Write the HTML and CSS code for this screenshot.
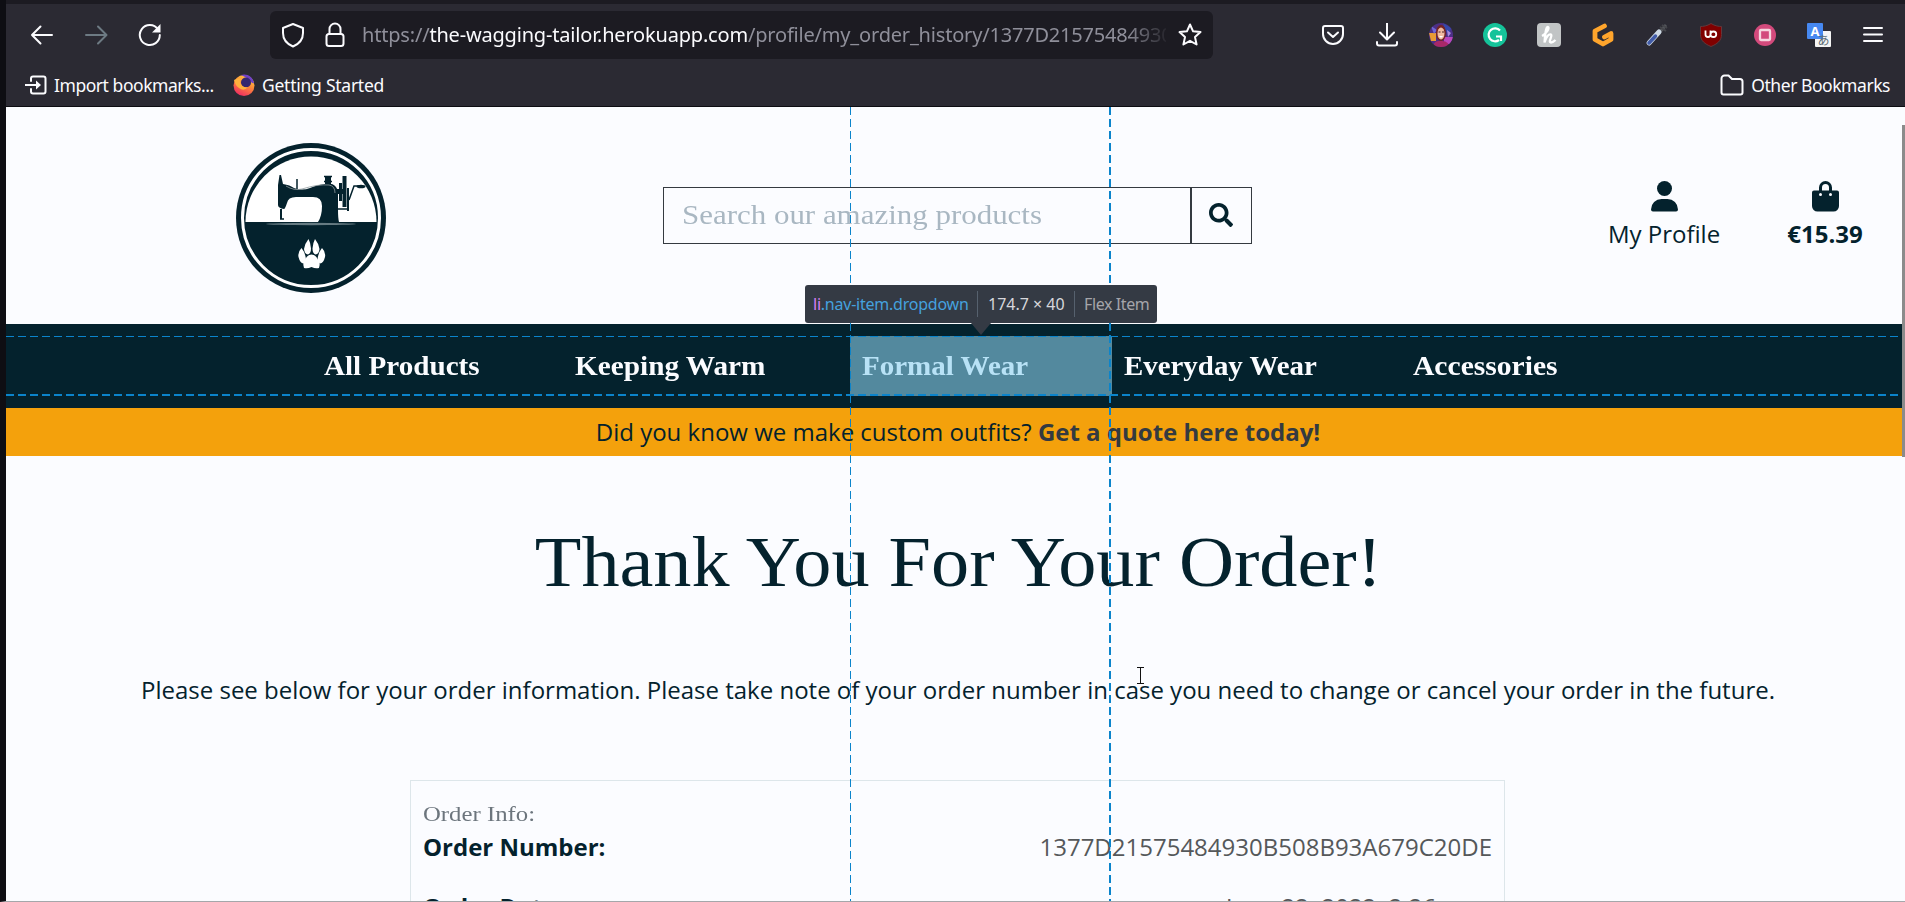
FILE: index.html
```html
<!DOCTYPE html>
<html lang="en">
<head>
<meta charset="utf-8">
<title>The Wagging Tailor</title>
<link rel="stylesheet" href="styles.css">
</head>
<body>
<div class="window">
  <div class="tabstrip"></div>
  <div class="toolbar">
    <svg class="ico back" width="24" height="24" viewBox="0 0 24 24"><path d="M22 12H2M10.500 3.500L2 12l8.500 8.500"/></svg>
    <svg class="ico forward" width="24" height="24" viewBox="0 0 24 24"><path d="M2 12h20M14 3.500l8.500 8.500-8.500 8.500"/></svg>
    <svg class="ico reload" width="24" height="24" viewBox="0 0 24 24"><path d="M20 6.300A10 10 0 1 0 21.800 12"/><path class="solid" d="M22.500 1v8.500H14z"/></svg>
    <div class="urlbar">
      <svg class="ico shield" width="24" height="26" viewBox="0 0 24 26"><path d="M12 2l10 4v5c0 6-4 11-10 13.500C6 22 2 17 2 11V6z"/></svg>
      <svg class="ico lock" width="20" height="26" viewBox="0 0 20 26"><path d="M4.500 12V7a5.500 5.500 0 0 1 11 0v5"/><rect x="1.500" y="12" width="17" height="12" rx="2.500"/></svg>
      <div class="url">https://<span>the-wagging-tailor.herokuapp.com</span>/profile/my_order_history/1377D21575484930</div>
      <svg class="ico star" width="26" height="26" viewBox="0 0 26 26"><path d="M13 2.500l3.100 6.800 7.400.8-5.500 5 1.600 7.400L13 18.800l-6.600 3.700L8 15.100l-5.500-5 7.400-.8z"/></svg>
    </div>
    <div class="extensions">
      <svg class="ico" width="24" height="24" viewBox="0 0 24 24"><path d="M4 3h16a2 2 0 0 1 2 2v6a10 10 0 0 1-20 0V5a2 2 0 0 1 2-2zM7 9.500l5 4.500 5-4.500"/></svg>
      <svg class="ico" width="24" height="24" viewBox="0 0 24 24"><path d="M12 0v16M5 9.500l7 7 7-7M2 19v1.500a2 2 0 0 0 2 2h16a2 2 0 0 0 2-2V19"/></svg>
      <svg width="24" height="24" viewBox="0 0 24 24"><defs><clipPath id="round"><circle cx="12" cy="12" r="12"/></clipPath></defs><g clip-path="url(#round)"><rect width="24" height="24" fill="#4c2f86"/><path d="M0 10h7v8H2z" fill="#e79a35"/><path d="M2 3l6 4-3 4z" fill="#6f66d8"/><path d="M14 0l8 5-2 7-4-5z" fill="#3448ab"/><path d="M15 14h9v7h-9z" fill="#b947bd"/><path d="M18 7l4 3-3 4z" fill="#a68ae0"/><path d="M4 24c1-6 4-6 8-6s8 1 8 6z" fill="#a72869"/><ellipse cx="12" cy="10" rx="5" ry="8" fill="#742425"/><ellipse cx="12" cy="10.500" rx="3.500" ry="6" fill="#f1bca2"/><path d="M10 13q2 3 4 0z" fill="#fff"/><path d="M9.500 9h2M13 9h2" stroke="#4a2020"/></g></svg>
      <svg width="24" height="24" viewBox="0 0 24 24"><circle cx="12" cy="12" r="12" fill="#15c39a"/><path d="M17 7.500a6.500 6.500 0 1 0-1 9.500M18 18v-4.500h-5" fill="none" stroke="#fff" stroke-width="2.200"/></svg>
      <svg width="24" height="24" viewBox="0 0 24 24"><rect width="24" height="24" rx="4" fill="#c1c4c5"/><path d="M5 13C9 11 13 5 11 4S8 12 7.500 19.500c1.500-5.500 4.500-9 6.500-8s-3.500 8 0 8q2 0 4.500-2.500" fill="none" stroke="#fff" stroke-width="2.300"/></svg>
      <svg width="24" height="24" viewBox="0 0 24 24"><path d="M13.500 3L4 8v8.500l8 4.500 8-4.500v-6l-6.500 3.500" fill="none" stroke="#ffa52c" stroke-width="4.800" stroke-linejoin="round" stroke-linecap="round"/></svg>
      <svg width="24" height="24" viewBox="0 0 24 24"><path d="M14 10l7-8" stroke="#55575e" stroke-width="3"/><path d="M15 4l6 4M17 2l5 3" stroke="#45464b" stroke-width="2"/><path d="M4 20L14 9" stroke="#ced9e5" stroke-width="5" stroke-linecap="round"/><path d="M4 20l6.500-7" stroke="#415ba8" stroke-width="3.500" stroke-linecap="round"/></svg>
      <svg width="24" height="24" viewBox="0 0 24 24"><path d="M12 .5C8 3 4 3.500 1.500 3.500v8C1.500 18 6 21 12 23.500 18 21 22.500 18 22.500 11.500v-8C20 3.500 16 3 12 .5z" fill="#800000" stroke="#62373b"/><path d="M6.500 7.500v4q0 2.500 2.500 2.500t2.500-2.500v-4M11.500 11.500q0-3 3-3a2.700 2.700 0 0 1 0 5.500q-3 0-3-2.500" fill="none" stroke="#fff" stroke-width="1.800"/></svg>
      <svg width="24" height="24" viewBox="0 0 24 24"><circle cx="12" cy="12" r="11" fill="#d34a7c"/><rect x="7" y="7" width="10" height="10" rx="1" fill="#d34a7c" stroke="#f5d7df" stroke-width="2.300"/></svg>
      <svg width="24" height="24" viewBox="0 0 24 24"><rect x="8" y="8" width="16" height="16" rx="1" fill="#f5f5f5"/><rect width="16" height="16" rx="1" fill="#4688f1"/><text class="latin" x="8" y="13">A</text><text class="kana" x="16.500" y="22">あ</text></svg>
      <svg class="ico menu" width="24" height="24" viewBox="0 0 24 24"><path d="M3 5h18M3 11.500h18M3 18h18"/></svg>
    </div>
  </div>
  <div class="bookmarks">
    <svg class="ico" width="22" height="20" viewBox="0 0 22 20"><path d="M6 6V3.500A2 2 0 0 1 8 1.500h10.500a2 2 0 0 1 2 2v13a2 2 0 0 1-2 2H8a2 2 0 0 1-2-2V14M0 10h12"/><path class="solid" d="M11 5.500l5 4.500-5 4.500z"/></svg>
    <span class="bm bm-import">Import bookmarks...</span>
    <svg width="22" height="22" viewBox="0 0 22 22"><defs><linearGradient id="flame" x1=".8" y1="0" x2=".3" y2="1"><stop offset="0" stop-color="#ffdc45"/><stop offset=".45" stop-color="#ff8b38"/><stop offset="1" stop-color="#ef2a63"/></linearGradient></defs><circle cx="11" cy="11.500" r="10.500" fill="url(#flame)"/><path d="M8 1c5-2 12 1 13 8-2 1-4-2-5-4z" fill="#7041c8"/><circle cx="13" cy="8.500" r="5" fill="#35266f"/><path d="M1 6q5-3 8-1-3 2-1 5 2 4 7 3-4 5-9 1Q2 11 1 6z" fill="#ffb13d"/></svg>
    <span class="bm bm-start">Getting Started</span>
    <svg class="ico folder" width="24" height="22" viewBox="0 0 24 22"><path d="M1.500 18.500v-14a3 3 0 0 1 3-3h4l3.500 3.500h8a2.500 2.500 0 0 1 2.500 2.500v11a2 2 0 0 1-2 2h-17a2 2 0 0 1-2-2z"/></svg>
    <span class="bm bm-other">Other Bookmarks</span>
  </div>

  <div class="page">
    <header class="header">
      <svg class="logo" width="150" height="150" viewBox="0 0 150 150">
        <circle cx="75" cy="75" r="75" fill="#04222d"/><circle cx="75" cy="75" r="68.500" fill="none" stroke="#fff" stroke-width="3"/>
        <path d="M9.500 79a65.500 65.500 0 0 1 131 0z" fill="#fff"/>
        <g fill="#04222d">
          <path d="M42 42l1.500-10h1.500l2 9q7 1 11 4 8 3 16 0 13-5 22-4 5 2 6 8v18q0 8 1 12H82q4-6 4-16 0-9-9-9H60q-8 0-9 6-2 6-3 6-6-1-6-4z"/>
          <path d="M89 33h6v8h-6zM103 40h3v18h-3zM106.500 33h4v31h-4zM111 45h2v23h-2zM44 66h2v10h-2zM99 46h8v5h-8z"/>
        </g>
        <path d="M61 36v10M88 33.500h8M88 38.500h8M113 57l5-14h5M100 66h13M44 76h4" fill="none" stroke="#04222d" stroke-width="1.500"/>
        <ellipse cx="125" cy="43.500" rx="4.500" ry="1.800" fill="#04222d"/>
        <path d="M50 43q8 5 16 3 16-5 27-4 6 1 6 8" fill="none" stroke="#8e999d" stroke-width=".8"/>
        <ellipse cx="75" cy="81" rx="45" ry="1.200" fill="#667b82"/>
        <g fill="#fff"><path d="M75.500 111.500q4 0 6 4.500 3.500 3.500 1.500 9-3.500 1-7.500-1-4 2-7.500 1-2-5.500 1.500-9 2-4.500 6-4.500z"/><path d="M72.500 96q-4 5-4.500 10 .5 5 4 5.500 3-1 3-6-.5-6-2.500-9.500zM79 96q-2 3.500-2.500 9.500 0 5 3 6 3.500-.5 4-5.500-.5-5-4.500-10zM65.500 105q-4 4-3 9 1.500 6 5 6.500 3.500-1.500 2-7-1-5-4-8.500zM86 105q-3 3.500-4 8.500-1.500 5.500 2 7 3.500-.5 5-6.500 1-5-3-9z"/></g>
      </svg>
      <div class="search">
        <div class="search-input"><span class="stretch placeholder">Search our amazing products</span></div>
        <div class="search-button"><svg width="24" height="24" viewBox="0 0 512 512"><path fill="#04222d" d="M505 442.700L405.300 343c-4.500-4.500-10.600-7-17-7H372c27.600-35.300 44-79.700 44-128C416 93.100 322.900 0 208 0S0 93.100 0 208s93.100 208 208 208c48.300 0 92.700-16.400 128-44v16.300c0 6.400 2.500 12.500 7 17l99.700 99.700c9.400 9.400 24.600 9.400 33.900 0l28.300-28.300c9.400-9.400 9.400-24.600.1-34zM208 336c-70.700 0-128-57.200-128-128 0-70.700 57.200-128 128-128 70.700 0 128 57.200 128 128 0 70.700-57.200 128-128 128z"/></svg></div>
      </div>
      <div class="account profile">
        <svg width="27" height="31" viewBox="0 0 27 31" fill="#04222d"><circle cx="13.500" cy="7.500" r="7.500"/><path d="M10.500 18h6A10.500 10.500 0 0 1 27 28.500q0 2-2 2H2q-2 0-2-2A10.500 10.500 0 0 1 10.500 18z"/></svg>
        <span>My Profile</span>
      </div>
      <div class="account bag">
        <svg width="27" height="31" viewBox="0 0 27 31"><path d="M8.500 12V6.500a5 5 0 0 1 10 0V12" fill="none" stroke="#04222d" stroke-width="3"/><path d="M2 9.500h23a2 2 0 0 1 2 2V25a5.500 5.500 0 0 1-5.500 5.500h-16A5.500 5.500 0 0 1 0 25V11.500a2 2 0 0 1 2-2z" fill="#04222d"/><circle cx="8.500" cy="13.500" r="1.500" fill="#fbfcff"/><circle cx="18.500" cy="13.500" r="1.500" fill="#fbfcff"/></svg>
        <span>€15.39</span>
      </div>
    </header>
    <nav class="nav">
      <div class="nav-item all"><span class="stretch">All Products</span></div>
      <div class="nav-item warm"><span class="stretch">Keeping Warm</span></div>
      <div class="nav-item formal"><span class="stretch">Formal Wear</span></div>
      <div class="nav-item everyday"><span class="stretch">Everyday Wear</span></div>
      <div class="nav-item accessories"><span class="stretch">Accessories</span></div>
    </nav>
    <div class="banner"><p>Did you know we make custom outfits? <b>Get a quote here today!</b></p></div>
    <h1 class="title"><span class="stretch">Thank You For Your Order!</span></h1>
    <p class="intro">Please see below for your order information. Please take note of your order number in case you need to change or cancel your order in the future.</p>
    <section class="order">
      <div class="order-head"><span class="stretch">Order Info:</span></div>
      <div class="row"><b>Order Number:</b><span class="num">1377D21575484930B508B93A679C20DE</span></div>
      <div class="row"><b>Order Date:</b><span class="date">June 22, 2022, 2:26 p.m.</span></div>
    </section>

    <div class="guide guide-left"></div>
    <div class="guide guide-right"></div>
    <div class="guide guide-top"></div>
    <div class="guide guide-bottom"></div>
    <div class="tooltip"><span class="selector"><i>li</i>.nav-item.dropdown</span><span class="size">174.7 × 40</span><span class="kind">Flex Item</span></div>
    <svg class="cursor" width="9" height="17" viewBox="0 0 9 17"><path d="M1 .5h7M4.500 1v15M1 16.500h7" stroke="#111"/></svg>
    <div class="scrollbar"></div>
  </div>
</div>
</body>
</html>
```
FILE: styles.css
```css
* { box-sizing: border-box; }
body { margin: 0; background: #fbfcff; font-family: "Open Sans", sans-serif; color: #04222d; }
p, h1 { margin: 0; font-weight: 400; }
svg { display: block; flex: none; }
.window { width: 1905px; height: 902px; overflow: hidden; border-left: 6px solid #0e0e13; border-bottom: 1px solid #a5a7aa; display: flex; flex-direction: column; background: #2b2a33; }
.tabstrip { height: 4px; background: #1c1b22; flex: none; }
.toolbar { height: 62px; display: flex; align-items: center; padding-left: 24px; flex: none; }
.ico { fill: none; stroke: #fbfbfe; stroke-width: 2; stroke-linecap: round; stroke-linejoin: round; }
.ico .solid { fill: #fbfbfe; stroke: none; }
.forward { stroke: #6d7a83; margin-left: 30px; }
.reload { margin-left: 30px; }
.urlbar { width: 943px; height: 48px; margin-left: 108px; background: #1c1b22; border-radius: 6px; display: flex; align-items: center; padding-left: 11px; }
.lock { margin-left: 20px; }
.url { width: 804px; margin-left: 17px; margin-right: 11px; font: 20px/28px "Noto Sans", sans-serif; letter-spacing: -.19px; color: #8f8f9a; white-space: nowrap; overflow: hidden; mask-image: linear-gradient(90deg, #000 765px, transparent 808px); }
.url span { color: #fbfbfe; }
.extensions { display: flex; gap: 30px; margin-left: 108px; }
.latin { font: 700 13px "Open Sans", sans-serif; fill: #fff; text-anchor: middle; }
.kana { font: 12px "Noto Sans CJK JP", sans-serif; fill: #5b6b76; text-anchor: middle; }
.bookmarks { height: 41px; border-bottom: 1px solid #0d0d12; display: flex; align-items: center; padding: 0 15px 2px 19px; flex: none; }
.bm { font: 17.500px/24px "Noto Sans", sans-serif; letter-spacing: -.45px; color: #fbfbfe; white-space: nowrap; margin-left: 7px; }
.bm-import { width: 179px; }
.bm-start { letter-spacing: -.25px; }
.folder { margin-left: auto; }
.page { position: relative; flex: 1; min-height: 0; overflow: hidden; background: #fbfcff; }

.stretch { display: inline-block; transform-origin: left center; white-space: nowrap; }
.search, .nav, .title, .order-head { font-family: "Liberation Serif", serif; }
.header { height: 217px; display: flex; align-items: flex-start; }
.logo { margin: 36px 0 0 230px; }
.search { width: 589px; height: 57px; margin: 80px 0 0 277px; display: flex; border: 1px solid #343a40; }
.search-input { width: 528px; padding-left: 18px; border-right: 2px solid #343a40; font-size: 28px; line-height: 54px; }
.placeholder { color: #a9b7c2; transform: scaleX(1.105); }
.search-button { flex: 1; display: flex; align-items: center; justify-content: center; padding: 0 2px 2px 0; }
.account { display: flex; flex-direction: column; align-items: center; font-size: 24px; line-height: 33px; margin-top: 74px; gap: 5px; white-space: nowrap; }
.profile { width: 112px; margin-left: 356px; }
.bag { width: 76px; margin-left: 67px; font-weight: 700; }

.nav { height: 84px; background: #04222d; padding: 12px 0 12px 306px; display: flex; color: #fbfcff; font-weight: 700; font-size: 28px; line-height: 60px; }
.nav-item { padding-left: 12px; height: 60px; }
.all { width: 251px; }
.warm { width: 287px; }
.formal { width: 262px; background: #53899e; color: #b8e2f6; }
.everyday { width: 289px; }
.all .stretch { transform: scaleX(1.04); }
.warm .stretch { transform: scaleX(1.045); }
.formal .stretch { transform: scaleX(1.036); }
.everyday .stretch { transform: scaleX(1.032); }
.accessories .stretch { transform: scaleX(1.057); }
.banner { height: 48px; background: #f4a10c; padding-left: 5px; text-align: center; font-size: 24px; line-height: 48px; }
.banner b { color: #343a40; }
.title { text-align: center; font-size: 71px; line-height: 82px; margin-top: 65px; padding-left: 5px; }
.title .stretch { transform-origin: center; transform: scaleX(1.074); }
.intro { text-align: center; font-size: 24px; line-height: 36px; margin-top: 69px; padding-left: 5px; white-space: nowrap; }
.order { width: 1095px; height: 200px; margin: 72px 0 0 404px; border: 1px solid #dde6ea; padding: 17px 12px 0; font-size: 24px; }
.order-head { font-size: 22px; line-height: 31px; color: #6c757d; }
.order-head .stretch { transform: scaleX(1.125); }
.row { display: flex; justify-content: space-between; line-height: 36px; margin-bottom: 24px; }
.num, .date { color: #55585a; }

.guide { position: absolute; }
.guide-left { left: 844px; top: 0; width: 1px; height: 100%; background: repeating-linear-gradient(#0b84cb 0 8px, transparent 8px 12px); }
.guide-right { left: 1103px; top: 0; width: 2px; height: 100%; background: repeating-linear-gradient(#0b84cb 0 8px, transparent 8px 12px); }
.guide-top { left: 0; top: 229px; width: 1896px; height: 1px; background: repeating-linear-gradient(90deg, #0b84cb 0 8px, transparent 8px 12px); }
.guide-bottom { left: 0; top: 287px; width: 1896px; height: 2px; background: repeating-linear-gradient(90deg, #0b84cb 0 8px, transparent 8px 12px); }
.tooltip { position: absolute; left: 799px; top: 178px; width: 352px; height: 38px; background: #343a44; border-radius: 3px; display: flex; align-items: center; padding-left: 8px; font: 16px/26px "Noto Sans", sans-serif; letter-spacing: -.23px; white-space: nowrap; }
.tooltip::after { content: ""; position: absolute; left: 166px; top: 38px; border: 10px solid transparent; border-top: 12px solid #343a44; border-bottom: 0; }
.selector { color: #45a1de; width: 164px; }
.selector i { font-style: normal; color: #d77ef5; }
.size { color: #d7d7db; border-left: 1px solid #56616e; padding-left: 10px; width: 97px; letter-spacing: 0; }
.kind { color: #a5a5aa; border-left: 1px solid #56616e; padding-left: 9px; letter-spacing: -.4px; }
.cursor { position: absolute; left: 1130px; top: 560px; }
.scrollbar { position: absolute; right: 0; top: 18px; width: 3px; height: 332px; background: #8b8b8b; }
```
